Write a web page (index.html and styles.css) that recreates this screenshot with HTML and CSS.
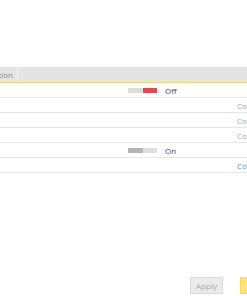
FILE: index.html
```html
<!DOCTYPE html>
<html lang="en">
<head>
    <meta charset="UTF-8">
    <meta name="viewport" content="width=device-width, initial-scale=1.0">
    <title>Settings</title>
    <link rel="stylesheet" href="styles.css">
</head>
<body>
    <div class="page">
        <div class="settings-table">
            <div class="table-head">
                <div class="head-cell first"><span>Action</span></div>
                <div class="head-cell rest"></div>
            </div>

            <div class="table-row">
                <div class="cell"></div>
                <div class="cell switch-cell">
                    <span class="switch off"><i></i><i></i></span>
                    <span class="switch-label">Off</span>
                </div>
                <div class="cell link-cell"></div>
            </div>
            <div class="table-row">
                <div class="cell"></div>
                <div class="cell"></div>
                <div class="cell link-cell"><a class="row-link muted">Configure</a></div>
            </div>
            <div class="table-row">
                <div class="cell"></div>
                <div class="cell"></div>
                <div class="cell link-cell"><a class="row-link muted">Configure</a></div>
            </div>
            <div class="table-row">
                <div class="cell"></div>
                <div class="cell"></div>
                <div class="cell link-cell"><a class="row-link muted">Configure</a></div>
            </div>
            <div class="table-row">
                <div class="cell"></div>
                <div class="cell switch-cell">
                    <span class="switch on"><i></i><i></i></span>
                    <span class="switch-label">On</span>
                </div>
                <div class="cell link-cell"></div>
            </div>
            <div class="table-row">
                <div class="cell"></div>
                <div class="cell"></div>
                <div class="cell link-cell"><a class="row-link">Configure</a></div>
            </div>
        </div>

        <div class="footer">
            <button class="btn apply-btn">Apply</button>
            <button class="btn ok-btn">OK</button>
        </div>
    </div>
</body>
</html>
```

FILE: styles.css
```css
:root {
    --text: #333;
    --muted: #a6a6a6;
    --link: #3a96dd;
    --line: #e6e6e6;
    --head: #e4e4e4;
    --accent: #f6d66c;
}

html, body {
    overflow: hidden;
}

body {
    font-family: 'Open Sans', 'Noto Sans', sans-serif;
    font-size: 8px;
    color: var(--text);
    margin: 0;
    background: #fff;
}

.page {
    width: 247px;
    height: 296px;
    padding-top: 67px;
    box-sizing: border-box;
}

.table-head {
    display: flex;
    height: 15px;
    background: var(--head);
    border-bottom: 1px solid var(--accent);
}

.head-cell {
    display: flex;
    align-items: center;
    overflow: hidden;
    white-space: nowrap;
    color: #888;
}

.head-cell.first {
    width: 18px;
    justify-content: flex-end;
    padding-right: 4px;
    box-sizing: border-box;
    border-right: 1px solid #f2f2f2;
}

.head-cell.rest {
    flex-grow: 1;
}

.table-row {
    display: grid;
    grid-template-columns: 128px 109px 1fr;
    height: 14px;
    border-bottom: 1px solid var(--line);
}

.cell {
    display: flex;
    align-items: center;
    overflow: hidden;
    white-space: nowrap;
}

.switch-cell {
    gap: 8px;
}

.switch {
    display: flex;
    width: 29px;
    height: 5px;
}

.switch i {
    flex: 1;
}

.switch.off i:first-child {
    background: #dcdcdc;
}

.switch.off i:last-child {
    background: #e64848;
}

.switch.on i:first-child {
    background: #b4b4b4;
}

.switch.on i:last-child {
    background: #dedede;
}

.switch-label {
    font-size: 8px;
    color: #444;
}

.row-link {
    color: var(--link);
    font-size: 8px;
}

.row-link.muted {
    color: var(--muted);
}

.footer {
    display: flex;
    gap: 17px;
    padding-left: 190px;
    margin-top: 104px;
    width: 300px;
}

.btn {
    flex-shrink: 0;
    width: 33px;
    height: 17px;
    padding: 0;
    font-family: inherit;
    font-size: 8px;
    border-radius: 0;
}

.apply-btn {
    background: #ebebeb;
    border: 1px solid #dadada;
    color: #aaa;
}

.ok-btn {
    background: #ffe27a;
    border: 1px solid #f8d760;
    color: #333;
}
```
